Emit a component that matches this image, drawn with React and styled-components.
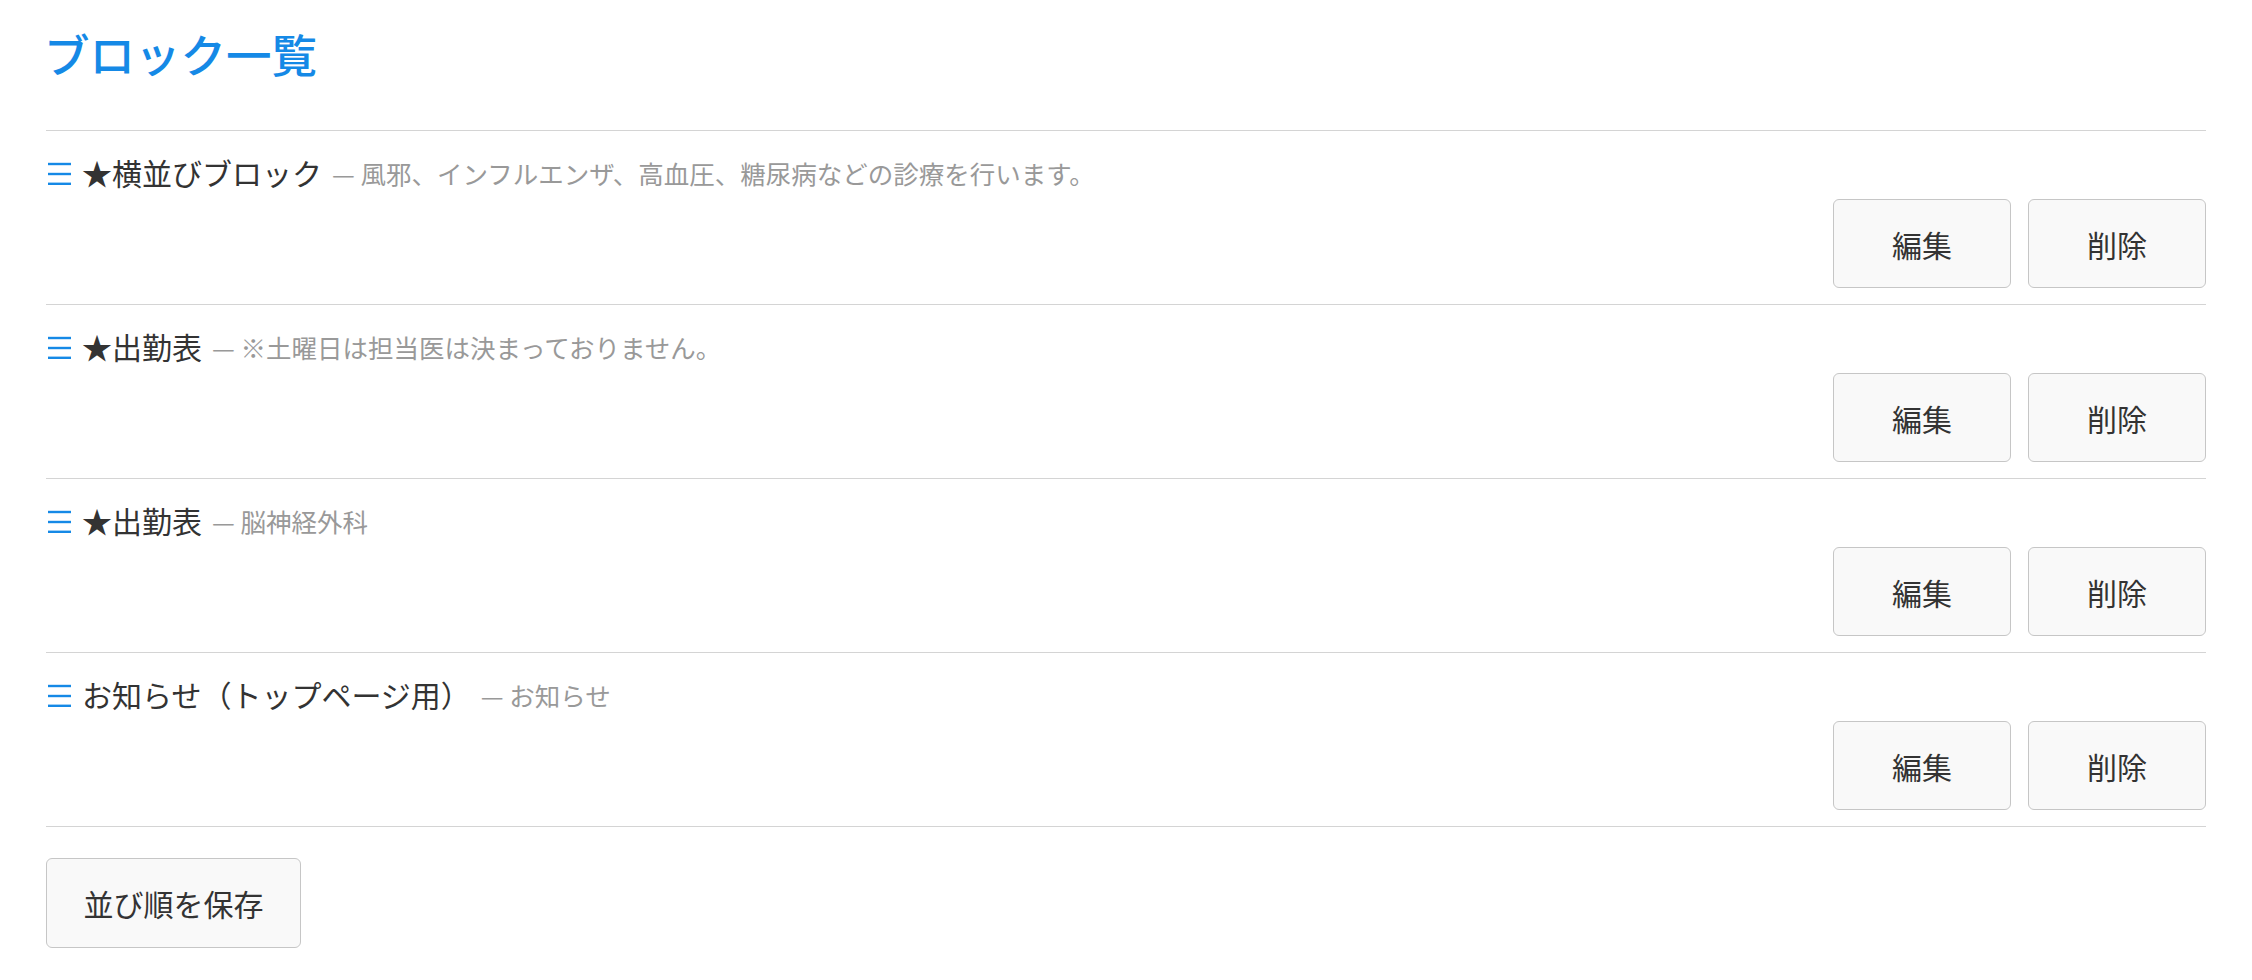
import React from 'react';
import styled, { createGlobalStyle } from 'styled-components';

const blocks = [
  { title: '★横並びブロック', desc: '風邪、インフルエンザ、高血圧、糖尿病などの診療を行います。' },
  { title: '★出勤表', desc: '※土曜日は担当医は決まっておりません。' },
  { title: '★出勤表', desc: '脳神経外科' },
  { title: 'お知らせ（トップページ用）', desc: 'お知らせ' },
];

const GlobalStyle = createGlobalStyle`
  body {
    margin: 0;
    background: #fff;
    font-family: "Noto Sans CJK JP", "Noto Sans", sans-serif;
    color: #333;
  }
`;

const Page = styled.div`
  padding: 27px 46px 30px;
`;

const Heading = styled.h1`
  margin: 0 0 50px -2px;
  font-size: 45.5px;
  line-height: 53px;
  font-weight: 500;
  color: #1589e6;
`;

const List = styled.ul`
  list-style: none;
  margin: 0;
  padding: 0;
  border-top: 1px solid #d4d4d4;
`;

const Row = styled.li`
  padding: 20px 0 16px;
  border-bottom: 1px solid #d4d4d4;
`;

const RowHead = styled.div`
  display: flex;
  align-items: center;
  height: 43px;
  white-space: nowrap;
`;

const Handle = styled.svg`
  flex: none;
  width: 26px;
  height: 24px;
  margin-right: 10px;
  cursor: move;
`;

const Title = styled.span`
  font-size: 30px;
  line-height: 43px;
  color: #333;
`;

const Desc = styled.span`
  margin-left: 10px;
  font-size: 25.5px;
  color: #999;
`;

const Actions = styled.div`
  display: flex;
  justify-content: flex-end;
  gap: 17px;
  margin-top: 5px;
`;

const Button = styled.button`
  display: flex;
  align-items: center;
  justify-content: center;
  width: ${(p) => (p.$wide ? '255px' : '178px')};
  height: ${(p) => (p.$wide ? '90px' : '89px')};
  padding: 0;
  border: 1px solid #c6c6c6;
  border-radius: 6px;
  background: #f9f9f9;
  font-family: inherit;
  font-size: 30px;
  color: #333;
  cursor: pointer;
`;

const Footer = styled.div`
  margin-top: 31px;
`;

export default function App() {
  return (
    <>
      <GlobalStyle />
      <Page>
        <Heading>ブロック一覧</Heading>
        <List>
          {blocks.map((b, i) => (
            <Row key={i}>
              <RowHead>
                <Handle viewBox="0 0 26 24">
                  <rect x="2" y="1.8" width="23" height="2.4" fill="#1589e6" />
                  <rect x="2" y="11.8" width="23" height="2.4" fill="#1589e6" />
                  <rect x="2" y="21.6" width="23" height="2.4" fill="#1589e6" />
                </Handle>
                <Title>{b.title}</Title>
                <Desc>— {b.desc}</Desc>
              </RowHead>
              <Actions>
                <Button>編集</Button>
                <Button>削除</Button>
              </Actions>
            </Row>
          ))}
        </List>
        <Footer>
          <Button $wide>並び順を保存</Button>
        </Footer>
      </Page>
    </>
  );
}
